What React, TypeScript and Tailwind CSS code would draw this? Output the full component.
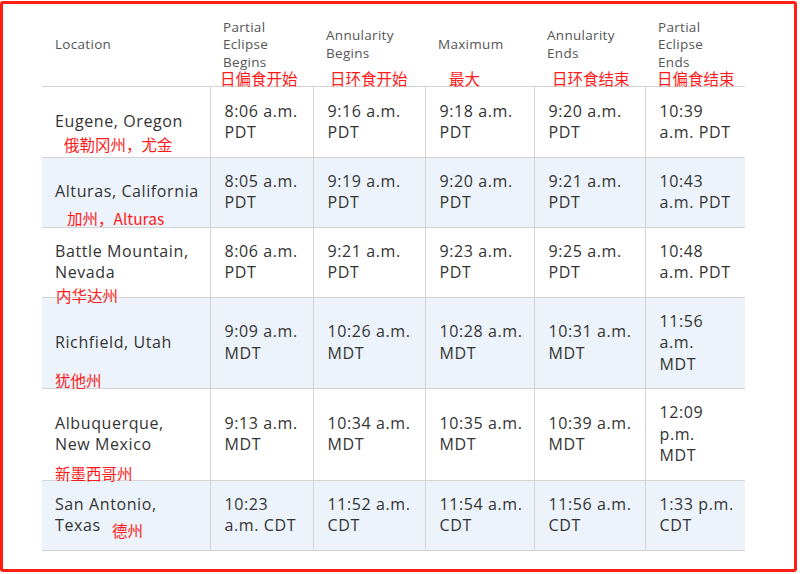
const headers = [
  ["Location"],
  ["Partial", "Eclipse", "Begins"],
  ["Annularity", "Begins"],
  ["Maximum"],
  ["Annularity", "Ends"],
  ["Partial", "Eclipse", "Ends"],
];

const colWidths = ["w-[168px]", "w-[103px]", "w-[112px]", "w-[109px]", "w-[111px]", "w-[100px]"];

// each cell is a list of lines, broken the way the original wraps
const rows: string[][][] = [
  [["Eugene, Oregon"], ["8:06 a.m.", "PDT"], ["9:16 a.m.", "PDT"], ["9:18 a.m.", "PDT"], ["9:20 a.m.", "PDT"], ["10:39", "a.m. PDT"]],
  [["Alturas, California"], ["8:05 a.m.", "PDT"], ["9:19 a.m.", "PDT"], ["9:20 a.m.", "PDT"], ["9:21 a.m.", "PDT"], ["10:43", "a.m. PDT"]],
  [["Battle Mountain,", "Nevada"], ["8:06 a.m.", "PDT"], ["9:21 a.m.", "PDT"], ["9:23 a.m.", "PDT"], ["9:25 a.m.", "PDT"], ["10:48", "a.m. PDT"]],
  [["Richfield, Utah"], ["9:09 a.m.", "MDT"], ["10:26 a.m.", "MDT"], ["10:28 a.m.", "MDT"], ["10:31 a.m.", "MDT"], ["11:56", "a.m.", "MDT"]],
  [["Albuquerque,", "New Mexico"], ["9:13 a.m.", "MDT"], ["10:34 a.m.", "MDT"], ["10:35 a.m.", "MDT"], ["10:39 a.m.", "MDT"], ["12:09", "p.m.", "MDT"]],
  [["San Antonio,", "Texas"], ["10:23", "a.m. CDT"], ["11:52 a.m.", "CDT"], ["11:54 a.m.", "CDT"], ["11:56 a.m.", "CDT"], ["1:33 p.m.", "CDT"]],
];

const notes = [
  { text: "日偏食开始", cls: "left-[217px] top-[64px]" },
  { text: "日环食开始", cls: "left-[327px] top-[64px]" },
  { text: "最大", cls: "left-[446px] top-[64px]" },
  { text: "日环食结束", cls: "left-[549px] top-[64px]" },
  { text: "日偏食结束", cls: "left-[654px] top-[64px]" },
  { text: "俄勒冈州，尤金", cls: "left-[61px] top-[130px]" },
  { text: "加州，Alturas", cls: "left-[64px] top-[204px]" },
  { text: "内华达州", cls: "left-[53px] top-[281px]" },
  { text: "犹他州", cls: "left-[52px] top-[366px]" },
  { text: "新墨西哥州", cls: "left-[52px] top-[459px]" },
  { text: "德州", cls: "left-[109px] top-[516px]" },
];

function Lines({ lines }: { lines: string[] }) {
  return (
    <>
      {lines.map((l, i) => (
        <div key={i} className="whitespace-nowrap">
          {l}
        </div>
      ))}
    </>
  );
}

export default function App() {
  return (
    <div className="h-[574px] w-[800px] bg-white pt-px">
      <div className="relative h-[571px] w-[797px] rounded-[3px] border-[3px] border-[#fe1f14] bg-white font-['Open_Sans','Liberation_Sans',sans-serif]">
        <table className="ml-[39px] w-[703px] table-fixed border-collapse">
          <colgroup>
            {colWidths.map((w, i) => (
              <col key={i} className={w} />
            ))}
          </colgroup>
          <thead>
            <tr className="border-b border-[#d3d3d3]">
              {headers.map((h, i) => (
                <th
                  key={i}
                  className="h-[82px] px-[13px] text-left align-middle text-[13.5px] font-normal leading-[17.5px] tracking-[0.3px] text-[#555]"
                >
                  <Lines lines={h} />
                </th>
              ))}
            </tr>
          </thead>
          <tbody>
            {rows.map((row, r) => (
              <tr key={r} className={`border-b border-[#d3d3d3] ${r % 2 === 1 ? "bg-[#ecf3fb]" : "bg-white"}`}>
                {row.map((cell, c) => (
                  <td
                    key={c}
                    className={`px-[13px] align-middle text-[16px] leading-[21.5px] tracking-[0.6px] text-[#333] ${r === 0 ? "pb-[13px] pt-[14px]" : "py-[13px]"} ${c > 0 ? "border-l border-[#d3d3d3] pl-[14px]" : ""}`}
                  >
                    <Lines lines={cell} />
                  </td>
                ))}
              </tr>
            ))}
          </tbody>
        </table>

        {notes.map((n) => (
          <span
            key={n.text}
            className={`absolute whitespace-nowrap font-['Noto_Sans_CJK_SC',sans-serif] text-[15.5px] leading-[20px] text-[#ff1a1a] ${n.cls}`}
          >
            {n.text}
          </span>
        ))}
      </div>
    </div>
  );
}
